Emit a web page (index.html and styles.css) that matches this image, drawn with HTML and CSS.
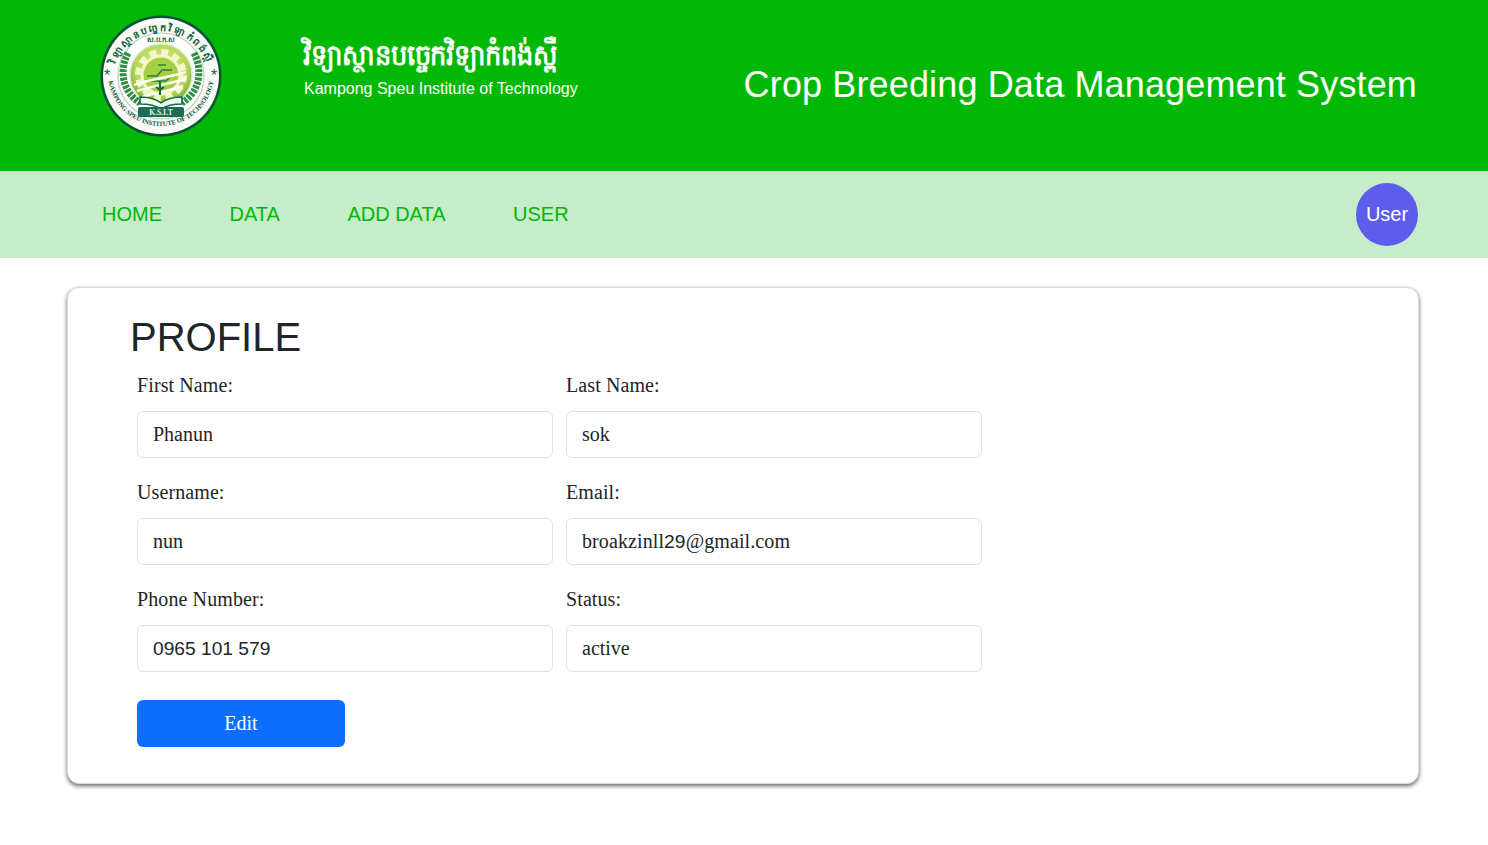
FILE: index.html
```html
<!DOCTYPE html>
<html lang="en">
<head>
<meta charset="utf-8">
<title>Crop Breeding Data Management System</title>
<link rel="stylesheet" href="styles.css">
</head>
<body>
<header class="top">
  <svg class="logo" viewBox="0 0 122 122" aria-label="Kampong Speu Institute of Technology logo">
    <defs>
      <path id="arcTop" d="M13 64a48 48 0 0 1 96 0"/>
      <path id="arcBottom" d="M8 58a53 53 0 0 0 106 0"/>
      <radialGradient id="disc" cx="50%" cy="40%" r="60%">
        <stop offset="0" stop-color="#e6f09a"/>
        <stop offset="0.7" stop-color="#b4d658"/>
        <stop offset="1" stop-color="#6fae35"/>
      </radialGradient>
    </defs>
    <circle cx="61" cy="61" r="60.5" fill="#0b5238"/>
    <circle cx="61" cy="61" r="58" fill="#f7faf5"/>
    <circle cx="61" cy="61" r="43" fill="#fff" stroke="#bcd0b8" stroke-width="1.2"/>
    <text class="logo-km" fill="#0d5f3f"><textPath href="#arcTop" startOffset="50%" text-anchor="middle">វិទ្យាស្ថានបច្ចេកវិទ្យាកំពង់ស្ពឺ</textPath></text>
    <text class="logo-en" fill="#0b5238"><textPath href="#arcBottom" startOffset="50%" text-anchor="middle">KAMPONG SPEU INSTITUTE OF TECHNOLOGY</textPath></text>
    <text x="4" y="66" class="logo-star" fill="#0d6a43">*</text>
    <text x="111" y="66" class="logo-star" fill="#0d6a43">*</text>
    <path d="M28 38c-9 18-6 38 12 50M94 38c9 18 6 38-12 50" fill="none" stroke="#2f8f45" stroke-width="7" stroke-dasharray="3 1.2"/>
    <circle cx="61" cy="60" r="31" fill="url(#disc)" stroke="#dfe9c8" stroke-width="1.5"/>
    <circle cx="61" cy="60" r="23" fill="none" stroke="#f3f7c6" stroke-width="6" stroke-dasharray="7 5"/>
    <circle cx="61" cy="60" r="19" fill="#a5cf45" stroke="#f3f7c6" stroke-width="3"/>
    <path d="M47 61h10l5-6h10M50 66h16l5-5M58 50h8" fill="none" stroke="#2e7f3a" stroke-width="1.5"/>
    <path d="M34 70c16-6 34-7 52-13M37 76c15-5 32-7 49-12M42 82c13-4 26-6 41-11" fill="none" stroke="#fbfdf2" stroke-width="2.4"/>
    <path d="M60 66v14M56 72l4 3 4-3" fill="none" stroke="#1a6b3e" stroke-width="2"/>
    <path d="M40 82c9 0 16 2 21 6 5-4 12-6 21-6v7c-8 0-15 1-21 5-6-4-13-5-21-5z" fill="#f4f8ea" stroke="#12694c" stroke-width="1.6"/>
    <rect x="38" y="92" width="46" height="10" rx="2" fill="#1b6d58"/>
    <text x="61" y="100" class="logo-ksit" text-anchor="middle" fill="#e8f3d8">K.S.I.T</text>
    <text x="61" y="27" class="logo-abbr" text-anchor="middle" fill="#0d6a43">ស.ប.ក.ស</text>
  </svg>
  <div class="brand">
    <div class="brand-km">វិទ្យាស្ថានបច្ចេកវិទ្យាកំពង់ស្ពឺ</div>
    <div class="brand-en">Kampong Speu Institute of Technology</div>
  </div>
  <h1 class="system">Crop Breeding Data Management System</h1>
</header>

<nav class="nav">
  <a href="#" class="nav-link">HOME</a>
  <a href="#" class="nav-link">DATA</a>
  <a href="#" class="nav-link">ADD DATA</a>
  <a href="#" class="nav-link">USER</a>
  <div class="avatar">User</div>
</nav>

<main class="card">
  <h2 class="title">PROFILE</h2>
  <form class="form">
    <div class="field">
      <label class="label">First Name:</label>
      <div class="input">Phanun</div>
    </div>
    <div class="field">
      <label class="label">Last Name:</label>
      <div class="input">sok</div>
    </div>
    <div class="field">
      <label class="label">Username:</label>
      <div class="input">nun</div>
    </div>
    <div class="field">
      <label class="label">Email:</label>
      <div class="input input-email">broakzinll<span class="digits">29</span>@gmail.com</div>
    </div>
    <div class="field">
      <label class="label">Phone Number:</label>
      <div class="input"><span class="digits">0965 101 579</span></div>
    </div>
    <div class="field">
      <label class="label">Status:</label>
      <div class="input">active</div>
    </div>
    <button type="button" class="edit">Edit</button>
  </form>
</main>
</body>
</html>
```
FILE: styles.css
```css
* { box-sizing: border-box; }
html, body { margin: 0; padding: 0; }
body {
  background: #fff;
  color: #212529;
  font-family: "Liberation Serif", "Times New Roman", serif;
  font-size: 20px;
  height: 845px;
  overflow: hidden;
}

.top {
  height: 171px;
  background: #03b804;
  display: flex;
  align-items: flex-start;
  color: #fff;
  padding: 15px 71px 0 100px;
}
.logo { width: 122px; height: 122px; flex: none; }
.logo-km { font-size: 9.5px; font-weight: 700; letter-spacing: 1.9px; font-family: "Noto Sans", sans-serif; }
.logo-en { font-size: 6.5px; font-weight: 700; font-family: "Liberation Serif", serif; }
.logo-star { font-size: 16px; font-family: "Liberation Sans", sans-serif; }
.logo-ksit { font-size: 7.5px; font-weight: 700; font-family: "Liberation Serif", serif; }
.logo-abbr { font-size: 7px; font-weight: 700; font-family: "Noto Sans", sans-serif; }

.brand { margin: 17px 0 0 78px; flex: none; width: 300px; }
.brand-km {
  font-family: "Noto Sans", "DejaVu Sans", sans-serif;
  font-size: 29px;
  font-weight: 700;
  line-height: 44px;
  white-space: nowrap;
  margin-left: 3px;
  transform: scaleX(0.885);
  transform-origin: left center;
}
.brand-en {
  font-family: "Liberation Sans", Arial, sans-serif;
  font-size: 16px;
  line-height: 22px;
  margin: 2px 0 0 4px;
  white-space: nowrap;
}
.system {
  margin: 47px 0 0 auto;
  font-family: "Liberation Sans", Arial, sans-serif;
  font-size: 36px;
  font-weight: 400;
  letter-spacing: 0.14px;
  line-height: 46px;
  white-space: nowrap;
}

.nav {
  height: 87px;
  background: #c7ecca;
  display: flex;
  align-items: center;
  gap: 67.5px;
  padding: 0 70px 0 102px;
}
.nav-link {
  font-family: "Liberation Sans", Arial, sans-serif;
  font-size: 20px;
  color: #03b804;
  text-decoration: none;
}
.avatar {
  margin-left: auto;
  width: 62px;
  height: 63px;
  border-radius: 50%;
  background: #5c5ced;
  color: #fff;
  font-family: "Liberation Sans", Arial, sans-serif;
  font-size: 20px;
  display: flex;
  align-items: center;
  justify-content: center;
}

.card {
  width: 1352px;
  height: 497px;
  margin: 29px 0 0 67px;
  padding: 25px 69px 0 69px;
  background: #fff;
  border: 1px solid #d9d9d9;
  border-radius: 12px;
  box-shadow: 0 2px 4px rgba(0, 0, 0, 0.6);
}
.title {
  margin: 0 0 0 -7px;
  font-family: "Liberation Sans", Arial, sans-serif;
  font-size: 40px;
  font-weight: 400;
  line-height: 48px;
}
.form {
  display: grid;
  grid-template-columns: 416px 416px;
  column-gap: 13px;
  row-gap: 19px;
  justify-items: start;
  margin-top: 9px;
}
.field { display: flex; flex-direction: column; width: 100%; }
.label { line-height: 30px; margin-bottom: 11px; letter-spacing: 0.1px; }
.input {
  height: 47px;
  border: 1px solid #dee2e6;
  border-radius: 6px;
  padding: 0 15px;
  display: flex;
  align-items: center;
  white-space: pre;
}
.input-email { letter-spacing: 0.1px; }
.digits { font-family: "Liberation Sans", Arial, sans-serif; font-size: 19.2px; }
.edit {
  width: 208px;
  height: 47px;
  margin-top: 9px;
  border: 0;
  border-radius: 6px;
  background: #0d6efd;
  color: #fff;
  font-family: inherit;
  font-size: 20px;
}
```
